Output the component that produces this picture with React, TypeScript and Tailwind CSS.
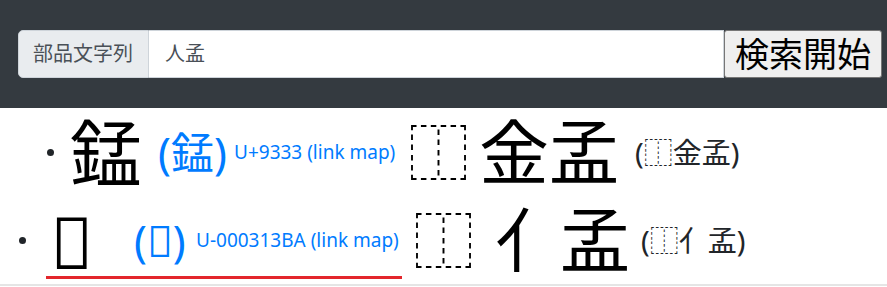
import React from 'react'

const FONT = "font-['Noto_Sans','Noto_Sans_CJK_JP',sans-serif]"

type TRowProps = {
  big: string
  code: string
  parts: React.ReactNode
  partsSmall: string
  underline?: boolean
}

const Bullet = ({ className }: { className: string }) => (
  <span className={`h-[7px] w-[7px] shrink-0 rounded-full bg-[#212529] ${className}`} />
)

const Head = ({ big, code, bigW, blueW }: { big: string; code: string; bigW: string; blueW: string }) => (
  <>
    <span className={`${bigW} shrink-0 text-[72px] leading-none text-black`}>{big}</span>
    <a className={`${blueW} shrink-0 whitespace-nowrap text-[43px] leading-none text-[#007bff]`}>({big})</a>
    <a className="shrink-0 whitespace-nowrap text-[19px] leading-none text-[#007bff]">{code} (link map)</a>
  </>
)

const Row = ({ big, code, parts, partsSmall, underline }: TRowProps) => (
  <li className="flex h-[88px] items-center">
    {underline ? (
      <>
        <Bullet className="ml-[19px]" />
        <div className="ml-[20px] flex h-[78px] w-[356px] shrink-0 items-center border-b-[3px] border-[#e3262c] pl-[4px] pt-[4px]">
          <Head big={big} code={code} bigW="w-[84px]" blueW="w-[62px]" />
        </div>
        <span className="ml-[11px] w-[72px] shrink-0 text-[61px] leading-none text-black">⿰</span>
      </>
    ) : (
      <>
        <Bullet className="ml-[47px]" />
        <div className="ml-[16px] flex w-[338px] shrink-0 items-center">
          <Head big={big} code={code} bigW="w-[88px]" blueW="w-[76px]" />
        </div>
        <span className="w-[71px] shrink-0 text-[61px] leading-none text-black">⿰</span>
      </>
    )}
    <span className="flex w-[150px] shrink-0 whitespace-nowrap text-[70px] leading-none text-black">
      {parts}
    </span>
    <span className="ml-[6px] shrink-0 whitespace-nowrap text-[29px] leading-none text-[#212529]">
      ({partsSmall})
    </span>
  </li>
)

export default function App() {
  return (
    <div className={`${FONT} h-[287px] w-[887px] overflow-hidden bg-white`}>
      <header className="flex h-[108px] items-center bg-[#343a40] pl-[18px] pr-[5px]">
        <div className="flex h-[48px] w-full items-stretch">
          <span className="flex w-[131px] shrink-0 items-center whitespace-nowrap rounded-l-[5px] border border-[#ced4da] bg-[#e9ecef] px-[14px] text-[20px] text-[#495057]">
            部品文字列
          </span>
          <div className="flex flex-1 items-center border border-l-0 border-[#ced4da] bg-white px-[16px] text-[20px] text-[#495057]">
            人孟
          </div>
          <button className="w-[158px] shrink-0 rounded-[3px] border border-[#767676] bg-[#efefef] text-[34px] leading-none text-black">
            検索開始
          </button>
        </div>
      </header>
      <ul className="border-b-2 border-[#e5e5e5]">
        <Row big={'\u9333'} code="U+9333" parts="金孟" partsSmall="⿰金孟" />
        <Row
          big={'\u{313BA}'}
          code="U-000313BA"
          parts={
            <>
              <span className="w-[75px] pl-[10px]">亻</span>
              <span>孟</span>
            </>
          }
          partsSmall="⿰亻孟"
          underline
        />
      </ul>
    </div>
  )
}
